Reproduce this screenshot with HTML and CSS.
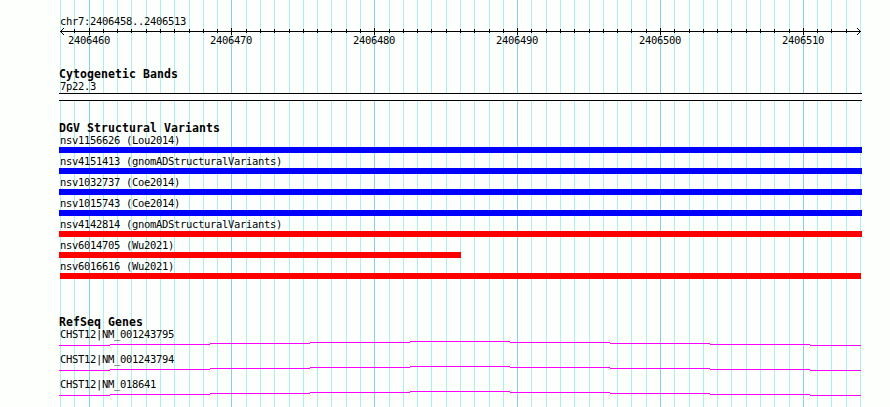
FILE: index.html
```
<!DOCTYPE html>
<html lang="en">
<head>
    <meta charset="UTF-8">
    <title>chr7:2406458..2406513</title>
    <link rel="stylesheet" href="styles.css">
</head>
<body>
    <main class="browser">
        <svg class="grid" id="grid" width="890" height="407"></svg>

        <section class="overview">
            <div class="label">chr7:2406458..2406513</div>
            <svg class="ruler" id="ruler" width="890" height="20"></svg>
        </section>

        <section class="track cytobands">
            <h2>Cytogenetic Bands</h2>
            <div class="label">7p22.3</div>
            <div class="band"></div>
        </section>

        <section class="track variants">
            <h2>DGV Structural Variants</h2>
            <div id="variants"></div>
        </section>

        <section class="track genes">
            <h2>RefSeq Genes</h2>
            <div id="genes"></div>
        </section>
    </main>

    <script src="script.js"></script>
</body>
</html>
```
FILE: styles.css
```
body {
    margin: 0;
    background-color: #fdfffc;
    color: #000;
    font-family: "DejaVu Sans Mono", "Liberation Mono", monospace;
    font-size: 10.5px;
}
.browser {
    position: relative;
    width: 890px;
    height: 407px;
    overflow: hidden;
}
svg {
    display: block;
    shape-rendering: crispEdges;
}
/* guide lines run behind all tracks */
.grid {
    position: absolute;
    top: 0;
    left: 0;
    z-index: -1;
}
.minor { fill: #afeeee; }
.major { fill: #87ceeb; }
.overview {
    padding-top: 16px;
}
.label {
    height: 11px;
    padding-left: 60px;
    line-height: 11px;
    letter-spacing: -0.32px;
    white-space: pre;
}
.ruler text {
    font-size: 10.5px;
    letter-spacing: -0.32px;
}
.arrow {
    fill: none;
    stroke: #000;
}
h2 {
    height: 12px;
    margin: 0;
    padding-left: 59px;
    font-size: 11.5px;
    line-height: 12px;
    letter-spacing: 0.08px;
}
.cytobands {
    padding-top: 21px;
}
.cytobands .label {
    padding-top: 1px;
}
.band {
    width: 803px;
    height: 8px;
    margin: 1px 0 0 59px;
    box-sizing: border-box;
    border: solid #000;
    border-width: 1px 0;
    background-color: #fff;
}
.variants {
    padding-top: 21px;
}
.variant {
    height: 20px;
    padding-top: 1px;
}
.bar {
    height: 6px;
    margin-top: 1px;
}
.gain { background-color: #0000ff; }
.loss { background-color: #ff0000; }
.genes {
    padding-top: 35px;
}
.gene {
    height: 24px;
    padding-top: 1px;
}
.gene svg {
    margin-top: 1px;
}
.intron { fill: #ff00ff; }
```
FILE: script.js
```
const variants = [
    { name: "nsv1156626 (Lou2014)", type: "gain", start: 59, end: 862 },
    { name: "nsv4151413 (gnomADStructuralVariants)", type: "gain", start: 59, end: 862 },
    { name: "nsv1032737 (Coe2014)", type: "gain", start: 59, end: 862 },
    { name: "nsv1015743 (Coe2014)", type: "gain", start: 59, end: 862 },
    { name: "nsv4142814 (gnomADStructuralVariants)", type: "loss", start: 59, end: 862 },
    { name: "nsv6014705 (Wu2021)", type: "loss", start: 59, end: 461 },
    { name: "nsv6016616 (Wu2021)", type: "loss", start: 60, end: 861 }
];
const genes = ["CHST12|NM_001243795", "CHST12|NM_001243794", "CHST12|NM_018641"];

const firstBase = 2406458;
const baseWidth = 800 / 56;

let grid = '';
let ruler = '<rect x="60" y="4" width="801" height="1"/>' +
    '<path class="arrow" d="M64 1L60.5 4.5L64 8M857 1L860.5 4.5L857 8"/>';
for (let i = 0; i <= 56; i++) {
    const x = Math.round(60 + i * baseWidth);
    const base = firstBase + i;
    const major = base % 10 === 0;
    grid += `<rect class="${major ? 'major' : 'minor'}" x="${x}" y="0" width="1" height="407"/>`;
    if (major) {
        ruler += `<rect x="${x}" y="1" width="1" height="7"/>`;
        ruler += `<text x="${x - 21}" y="17">${base}</text>`;
    } else if (i > 0 && i < 56) {
        ruler += `<rect x="${x}" y="2" width="1" height="4"/>`;
    }
}
document.getElementById('grid').innerHTML = grid;
document.getElementById('ruler').innerHTML = ruler;

document.getElementById('variants').innerHTML = variants.map(v => `
    <div class="variant">
        <div class="label">${v.name}</div>
        <div class="bar ${v.type}" style="margin-left: ${v.start}px; width: ${v.end - v.start}px"></div>
    </div>
`).join('');

// introns are shallow arcs, drawn one pixel row at a time
const steps = [59, 110, 210, 310, 410, 510, 610, 710, 810, 861];
const heights = [4, 3, 2, 1, 0, 1, 2, 3, 4];
const intron = heights.map((y, i) =>
    `<rect class="intron" x="${steps[i]}" y="${y}" width="${steps[i + 1] - steps[i]}" height="1"/>`
).join('');
document.getElementById('genes').innerHTML = genes.map(name => `
    <div class="gene">
        <div class="label">${name}</div>
        <svg width="890" height="5">${intron}</svg>
    </div>
`).join('');
```
